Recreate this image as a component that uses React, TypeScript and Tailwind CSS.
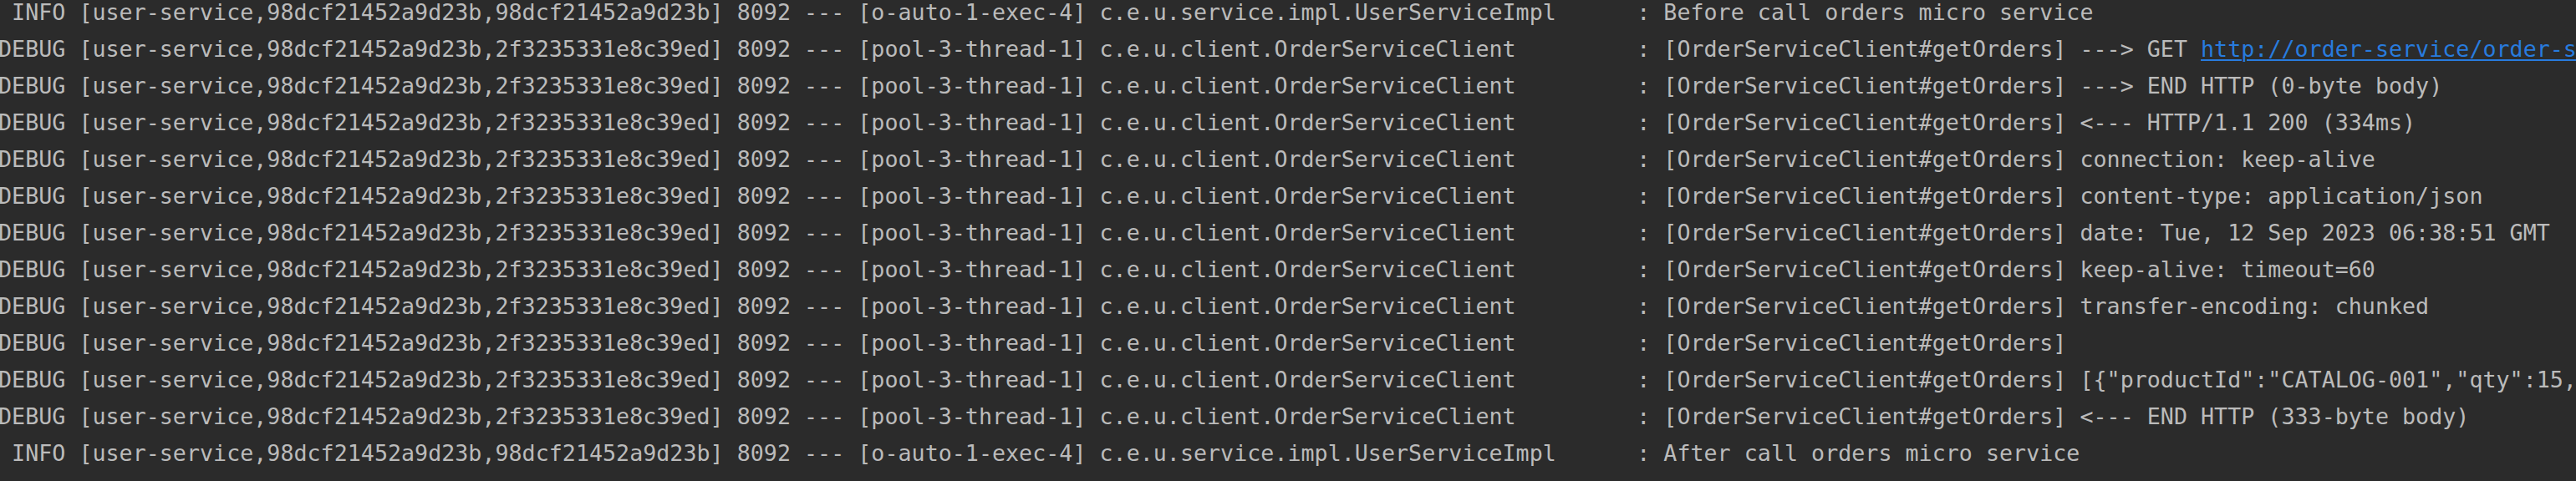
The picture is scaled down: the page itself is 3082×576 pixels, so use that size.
import React from "react";

const INFO_PREFIX = " INFO [user-service,98dcf21452a9d23b,98dcf21452a9d23b] 8092 --- [o-auto-1-exec-4] ";
const DEBUG_PREFIX = "DEBUG [user-service,98dcf21452a9d23b,2f3235331e8c39ed] 8092 --- [pool-3-thread-1] ";
const USER_LOGGER = "c.e.u.service.impl.UserServiceImpl".padEnd(40, " ");
const CLIENT_LOGGER = "c.e.u.client.OrderServiceClient".padEnd(40, " ");
const TAG = "[OrderServiceClient#getOrders]";

type Line = { head: string; msg: string; link?: string };

const lines: Line[] = [
  { head: INFO_PREFIX + USER_LOGGER, msg: "Before call orders micro service" },
  { head: DEBUG_PREFIX + CLIENT_LOGGER, msg: TAG + " ---> GET ", link: "http://order-service/order-service/api/v1/orders?userId=1 HTTP/1.1" },
  { head: DEBUG_PREFIX + CLIENT_LOGGER, msg: TAG + " ---> END HTTP (0-byte body)" },
  { head: DEBUG_PREFIX + CLIENT_LOGGER, msg: TAG + " <--- HTTP/1.1 200 (334ms)" },
  { head: DEBUG_PREFIX + CLIENT_LOGGER, msg: TAG + " connection: keep-alive" },
  { head: DEBUG_PREFIX + CLIENT_LOGGER, msg: TAG + " content-type: application/json" },
  { head: DEBUG_PREFIX + CLIENT_LOGGER, msg: TAG + " date: Tue, 12 Sep 2023 06:38:51 GMT" },
  { head: DEBUG_PREFIX + CLIENT_LOGGER, msg: TAG + " keep-alive: timeout=60" },
  { head: DEBUG_PREFIX + CLIENT_LOGGER, msg: TAG + " transfer-encoding: chunked" },
  { head: DEBUG_PREFIX + CLIENT_LOGGER, msg: TAG },
  { head: DEBUG_PREFIX + CLIENT_LOGGER, msg: TAG + ' [{"productId":"CATALOG-001","qty":15,"price":120.5,"orderId":"ORD-001"}]' },
  { head: DEBUG_PREFIX + CLIENT_LOGGER, msg: TAG + " <--- END HTTP (333-byte body)" },
  { head: INFO_PREFIX + USER_LOGGER, msg: "After call orders micro service" },
  { head: DEBUG_PREFIX + CLIENT_LOGGER, msg: TAG + " ---> GET http://order-service/" },
];

export default function App() {
  return (
    <div className="w-full h-[576px] overflow-hidden bg-[#2b2b2b]">
      <div
        className="-mt-[7px] -ml-[2px] flex flex-col text-[26.7px] leading-[44px] text-[#bbbbbb] whitespace-pre"
        style={{ fontFamily: '"DejaVu Sans Mono", "Liberation Mono", monospace' }}
      >
        {lines.map((l, i) => (
          <div key={i} className="h-[44px]">
            <span>{l.head}</span>
            <span>: </span>
            <span>{l.msg}</span>
            {l.link && (
              <span className="text-[#287bde] underline decoration-2 underline-offset-[3px]">{l.link}</span>
            )}
          </div>
        ))}
      </div>
    </div>
  );
}
